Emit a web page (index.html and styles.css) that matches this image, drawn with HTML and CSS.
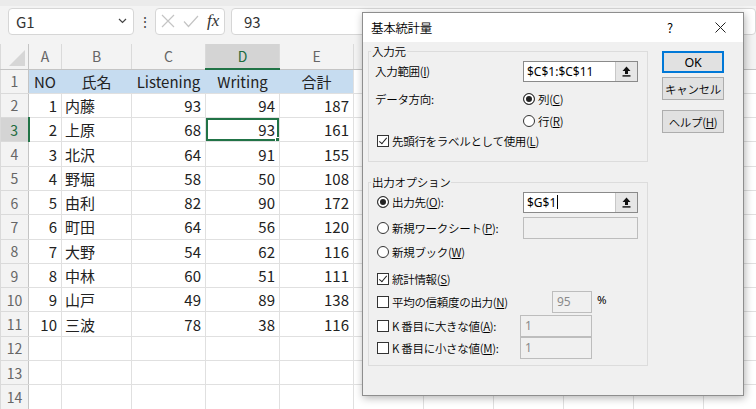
FILE: index.html
```html
<!DOCTYPE html>
<html lang="ja">
<head>
    <meta charset="UTF-8">
    <meta name="viewport" content="width=device-width, initial-scale=1.0">
    <title>基本統計量</title>
    <link rel="stylesheet" href="styles.css">
</head>
<body>
    <div class="excel">
        <div class="toolbar">
            <div class="namebox">
                <span>G1</span>
                <svg width="9" height="6" viewBox="0 0 9 6"><path d="M1 1l3.5 3.5L8 1" stroke="#444" fill="none" stroke-width="1.2"/></svg>
            </div>
            <div class="vdots">⋮</div>
            <div class="fxbox">
                <svg width="14" height="14" viewBox="0 0 14 14"><path d="M1 1L13 13M13 1L1 13" stroke="#c4c4c4" stroke-width="1.2"/></svg>
                <svg width="16" height="13" viewBox="0 0 16 13"><path d="M1 6.5l4.5 5L15 1" stroke="#c4c4c4" fill="none" stroke-width="1.2"/></svg>
                <span class="fx">fx</span>
            </div>
            <div class="formula">93</div>
        </div>

        <table class="grid">
            <colgroup>
                <col style="width:28px"><col style="width:33px"><col style="width:70px">
                <col style="width:74px"><col style="width:74px"><col style="width:74px">
                <col style="width:70px"><col style="width:70px"><col style="width:70px">
                <col style="width:70px"><col style="width:70px"><col style="width:70px">
            </colgroup>
            <tr class="colheads">
                <th class="corner"><svg width="18" height="18" viewBox="0 0 18 18"><path d="M17 1V17H1z" fill="#d6d6d6"/></svg></th>
                <th>A</th><th>B</th><th>C</th><th class="sel">D</th><th>E</th>
                <th></th><th></th><th></th><th></th><th></th><th></th>
            </tr>
            <tr class="hd">
                <th>1</th><td>NO</td><td>氏名</td><td>Listening</td><td>Writing</td><td class="last">合計</td>
                <td></td><td></td><td></td><td></td><td></td><td></td>
            </tr>
            <tr>
                <th>2</th><td class="n">1</td><td class="t">内藤</td><td class="n">93</td><td class="n">94</td><td class="n">187</td>
                <td></td><td></td><td></td><td></td><td></td><td></td>
            </tr>
            <tr>
                <th class="sel">3</th><td class="n">2</td><td class="t">上原</td><td class="n">68</td><td class="n active">93</td><td class="n">161</td>
                <td></td><td></td><td></td><td></td><td></td><td></td>
            </tr>
            <tr>
                <th>4</th><td class="n">3</td><td class="t">北沢</td><td class="n">64</td><td class="n">91</td><td class="n">155</td>
                <td></td><td></td><td></td><td></td><td></td><td></td>
            </tr>
            <tr>
                <th>5</th><td class="n">4</td><td class="t">野堀</td><td class="n">58</td><td class="n">50</td><td class="n">108</td>
                <td></td><td></td><td></td><td></td><td></td><td></td>
            </tr>
            <tr>
                <th>6</th><td class="n">5</td><td class="t">由利</td><td class="n">82</td><td class="n">90</td><td class="n">172</td>
                <td></td><td></td><td></td><td></td><td></td><td></td>
            </tr>
            <tr>
                <th>7</th><td class="n">6</td><td class="t">町田</td><td class="n">64</td><td class="n">56</td><td class="n">120</td>
                <td></td><td></td><td></td><td></td><td></td><td></td>
            </tr>
            <tr>
                <th>8</th><td class="n">7</td><td class="t">大野</td><td class="n">54</td><td class="n">62</td><td class="n">116</td>
                <td></td><td></td><td></td><td></td><td></td><td></td>
            </tr>
            <tr>
                <th>9</th><td class="n">8</td><td class="t">中林</td><td class="n">60</td><td class="n">51</td><td class="n">111</td>
                <td></td><td></td><td></td><td></td><td></td><td></td>
            </tr>
            <tr>
                <th>10</th><td class="n">9</td><td class="t">山戸</td><td class="n">49</td><td class="n">89</td><td class="n">138</td>
                <td></td><td></td><td></td><td></td><td></td><td></td>
            </tr>
            <tr>
                <th>11</th><td class="n">10</td><td class="t">三波</td><td class="n">78</td><td class="n">38</td><td class="n">116</td>
                <td></td><td></td><td></td><td></td><td></td><td></td>
            </tr>
            <tr>
                <th>12</th><td></td><td></td><td></td><td></td><td></td>
                <td></td><td></td><td></td><td></td><td></td><td></td>
            </tr>
            <tr>
                <th>13</th><td></td><td></td><td></td><td></td><td></td>
                <td></td><td></td><td></td><td></td><td></td><td></td>
            </tr>
            <tr>
                <th>14</th><td></td><td></td><td></td><td></td><td></td>
                <td></td><td></td><td></td><td></td><td></td><td></td>
            </tr>
        </table>
    </div>

    <!-- 基本統計量ダイアログ -->
    <div class="dialog">
        <div class="titlebar">
            <span class="title">基本統計量</span>
            <span class="qmark">?</span>
            <svg class="close" width="11" height="11" viewBox="0 0 11 11"><path d="M0.5 0.5L10.5 10.5M10.5 0.5L0.5 10.5" stroke="#222" stroke-width="1"/></svg>
        </div>
        <div class="dlg-body">
            <div class="groups">
                <fieldset class="group g-in">
                    <legend>入力元</legend>
                    <div class="row r-range">
                        <span class="lbl">入力範囲(<u>I</u>)</span>
                        <div class="refbox">
                            <span class="val">$C$1:$C$11</span>
                            <span class="pick"><svg width="9" height="11" viewBox="0 0 9 11"><path d="M4.5 0.5L8.5 5H6v3H3V5H0.5z" fill="#111"/><rect x="0.5" y="9.2" width="8" height="1.4" fill="#111"/></svg></span>
                        </div>
                    </div>
                    <div class="row r-dir">
                        <span class="lbl">データ方向:</span>
                        <span class="opt"><span class="radio on"></span>列(<u>C</u>)</span>
                    </div>
                    <div class="row r-row">
                        <span class="lbl"></span>
                        <span class="opt"><span class="radio"></span>行(<u>R</u>)</span>
                    </div>
                    <div class="row r-label">
                        <span class="opt"><span class="check on"></span>先頭行をラベルとして使用(<u>L</u>)</span>
                    </div>
                </fieldset>

                <fieldset class="group g-out">
                    <legend>出力オプション</legend>
                    <div class="row r-dest">
                        <span class="lbl"><span class="radio on"></span>出力先(<u>O</u>):</span>
                        <div class="refbox">
                            <span class="val">$G$1<span class="caret"></span></span>
                            <span class="pick"><svg width="9" height="11" viewBox="0 0 9 11"><path d="M4.5 0.5L8.5 5H6v3H3V5H0.5z" fill="#111"/><rect x="0.5" y="9.2" width="8" height="1.4" fill="#111"/></svg></span>
                        </div>
                    </div>
                    <div class="row r-sheet">
                        <span class="lbl"><span class="radio"></span>新規ワークシート(<u>P</u>):</span>
                        <div class="box off wide"></div>
                    </div>
                    <div class="row r-book">
                        <span class="lbl"><span class="radio"></span>新規ブック(<u>W</u>)</span>
                    </div>
                    <div class="row r-stats">
                        <span class="lbl"><span class="check on"></span>統計情報(<u>S</u>)</span>
                    </div>
                    <div class="row r-conf">
                        <span class="lbl lbl-conf"><span class="check"></span>平均の信頼度の出力(<u>N</u>)</span>
                        <div class="box off conf">95</div>
                        <span class="pct">%</span>
                    </div>
                    <div class="row r-large">
                        <span class="lbl lbl-k"><span class="check"></span>K 番目に大きな値(<u>A</u>):</span>
                        <div class="box off kbox">1</div>
                    </div>
                    <div class="row r-small">
                        <span class="lbl lbl-k"><span class="check"></span>K 番目に小さな値(<u>M</u>):</span>
                        <div class="box off kbox">1</div>
                    </div>
                </fieldset>
            </div>

            <div class="buttons">
                <button class="btn ok">OK</button>
                <button class="btn cancel">キャンセル</button>
                <button class="btn help">ヘルプ(<u>H</u>)</button>
            </div>
        </div>
    </div>
</body>
</html>
```

FILE: styles.css
```css
html, body {
    margin: 0;
    width: 756px;
    height: 409px;
    overflow: hidden;
}

body {
    position: relative;
    background-color: #f3f3f3;
    font-family: "Noto Sans CJK JP", "Noto Sans", sans-serif;
}

/* ---- Excel ---- */

.excel {
    width: 756px;
    height: 409px;
    overflow: hidden;
}

.toolbar {
    display: flex;
    align-items: center;
    height: 44px;
    padding-bottom: 8px;
    box-sizing: border-box;
    border-top: 6px solid #ebebeb;
}

.namebox {
    display: flex;
    align-items: center;
    justify-content: space-between;
    width: 126px;
    height: 27px;
    margin-left: 8px;
    padding: 0 6px 0 7px;
    box-sizing: border-box;
    background-color: #ffffff;
    border: 1px solid #d6d6d6;
    border-radius: 4px;
    font-size: 15px;
    color: #333;
}

.vdots {
    width: 21px;
    text-align: center;
    font-size: 14px;
    color: #444;
}

.fxbox {
    display: flex;
    align-items: center;
    gap: 8px;
    width: 70px;
    height: 27px;
    padding-left: 5px;
    box-sizing: border-box;
    background-color: #ffffff;
    border: 1px solid #d6d6d6;
    border-radius: 4px;
}

.fx {
    font-family: "Liberation Serif", serif;
    font-style: italic;
    font-size: 17px;
    color: #333;
}

.formula {
    flex: 1;
    height: 27px;
    margin-left: 6px;
    padding-left: 12px;
    box-sizing: border-box;
    background-color: #ffffff;
    border: 1px solid #d6d6d6;
    border-radius: 4px;
    font-size: 15px;
    line-height: 25px;
    color: #333;
}

.grid {
    border-collapse: collapse;
    table-layout: fixed;
    width: 773px;
    font-size: 15px;
    color: #222;
}

.grid tr {
    height: 24.3px;
}

.grid tr.colheads {
    height: 25px;
}

.grid td, .grid th {
    padding: 0;
    border: 1px solid #e0e0e0;
    background-color: #ffffff;
    white-space: nowrap;
    overflow: hidden;
    font-weight: normal;
    line-height: 1;
}

.grid th {
    background-color: #f3f3f3;
    color: #666;
    font-size: 14px;
    border-color: #dadada;
}

.grid tr th:first-child {
    border-right: 1px solid #c4c4c4;
}

.colheads th {
    border-top: none;
    border-bottom: 1px solid #c4c4c4;
}

.colheads th.corner {
    text-align: right;
    vertical-align: bottom;
    padding: 0 2px 2px 0;
}

.corner svg {
    display: block;
    margin-left: auto;
}

.grid th.sel {
    background-color: #d4d4d4;
    color: #1d6b3e;
}

.colheads th.sel {
    border-bottom: 2px solid #217346;
}

.grid tr th.sel:first-child {
    border-right: 2px solid #217346;
}

.hd td {
    text-align: center;
}

.hd td:nth-child(-n+6) {
    background-color: #c6dcf0;
    border-right-color: #c6dcf0;
}

.hd td.last {
    border-right-color: #e0e0e0;
}

.n {
    text-align: right;
    padding-right: 4px !important;
}

.t {
    padding-left: 3px !important;
}

.active {
    position: relative;
    box-shadow: inset 0 0 0 2px #217346;
}

.active::after {
    content: "";
    position: absolute;
    right: -3px;
    bottom: -3px;
    width: 5px;
    height: 5px;
    background-color: #217346;
    border: 1px solid #ffffff;
}

/* ---- ダイアログ ---- */

.dialog {
    position: absolute;
    left: 362px;
    top: 12px;
    width: 382px;
    height: 384px;
    box-sizing: border-box;
    background-color: #f0f0f0;
    border: 1px solid #8e8e8e;
    box-shadow: 1px 2px 8px rgba(0, 0, 0, 0.3);
    font-size: 11.5px;
    font-weight: 350;
    letter-spacing: -0.3px;
    line-height: 14px;
    color: #000;
}

.titlebar {
    display: flex;
    align-items: center;
    height: 29px;
    padding-left: 8px;
    background-color: #ffffff;
}

.title {
    flex: 1;
    font-size: 12.5px;
}

.qmark {
    width: 14px;
    margin-right: 34px;
    font-size: 13px;
}

.close {
    margin-right: 17px;
}

.dlg-body {
    display: flex;
    padding-left: 5px;
}

.groups {
    width: 280px;
}

.group {
    margin: 3px 0 0 0;
    padding: 0 0 0 6px;
    border: 1px solid #dcdcdc;
}

.group legend {
    padding: 0 1px;
    margin-left: -4px;
    line-height: 12px;
}

.g-in {
    padding-bottom: 10px;
}

.g-out {
    margin-top: 14px;
    padding-bottom: 6px;
}

.row {
    display: flex;
    align-items: center;
    height: 22px;
}

.lbl {
    display: flex;
    align-items: center;
    width: 148px;
    flex: none;
}

.lbl-conf {
    width: 177px;
}

.lbl-k {
    width: 145px;
}

.opt {
    display: flex;
    align-items: center;
}

.r-range { margin-top: 3px; }
.r-dir { margin-top: 6px; }
.r-label { margin-top: -1px; height: 20px; }

.r-dest { margin-top: 3px; }
.r-sheet { margin-top: 4px; }
.r-book { margin-top: 2px; }
.r-stats { margin-top: 5px; }
.r-conf { margin-top: 1px; }
.r-large { margin-top: 2px; }

.radio, .check {
    flex: none;
    width: 12px;
    height: 12px;
    box-sizing: border-box;
    border: 1px solid #333;
    background-color: #ffffff;
    margin-right: 3px;
}

.lbl .radio, .lbl .check, .r-label .check {
    margin-left: 2px;
}

.radio {
    border-radius: 50%;
}

.radio.on {
    background-color: #222;
    box-shadow: inset 0 0 0 2px #ffffff;
}

.check.on {
    position: relative;
}

.check.on::after {
    content: "";
    position: absolute;
    left: 3px;
    top: 0px;
    width: 3px;
    height: 7px;
    border: solid #222;
    border-width: 0 1px 1px 0;
    transform: rotate(40deg);
}

.refbox {
    display: flex;
    width: 115px;
    height: 21px;
    box-sizing: border-box;
    border: 1px solid #8a8a8a;
    background-color: #ffffff;
}

.val {
    flex: 1;
    padding-left: 3px;
    line-height: 19px;
    letter-spacing: 0;
    font-family: "Noto Sans", sans-serif;
    font-weight: 400;
    font-size: 12px;
}

.caret {
    display: inline-block;
    width: 1px;
    height: 14px;
    margin-left: 1px;
    vertical-align: -2px;
    background-color: #000;
}

.pick {
    display: flex;
    align-items: center;
    justify-content: center;
    width: 21px;
    background-color: #e6e6e6;
    border-left: 1px solid #c8c8c8;
}

.box {
    height: 22px;
    box-sizing: border-box;
    border: 1px solid #bdbdbd;
    padding-left: 4px;
    line-height: 20px;
    font-family: "Noto Sans", sans-serif;
    font-weight: 400;
    font-size: 12px;
    letter-spacing: 0;
}

.box.off {
    background-color: #f0f0f0;
    color: #8a8a8a;
}

.wide {
    width: 115px;
}

.conf {
    width: 40px;
}

.kbox {
    width: 72px;
}

.pct {
    margin-left: 5px;
    margin-top: -4px;
    font-family: "Noto Sans", sans-serif;
    font-weight: 400;
}

.buttons {
    display: flex;
    flex-direction: column;
    margin-left: 14px;
    padding-top: 9px;
}

.btn {
    width: 62px;
    height: 23px;
    padding: 0;
    box-sizing: border-box;
    background-color: #e1e1e1;
    border: 1px solid #adadad;
    font-family: inherit;
    font-size: 11.5px;
    font-weight: 350;
    letter-spacing: -0.3px;
    color: #000;
}

.btn.ok {
    height: 22px;
    border: 2px solid #0078d7;
    font-family: "Noto Sans", sans-serif;
    font-weight: 400;
    font-size: 12.5px;
}

.btn.cancel {
    margin-top: 4px;
}

.btn.help {
    margin-top: 10px;
}
```
